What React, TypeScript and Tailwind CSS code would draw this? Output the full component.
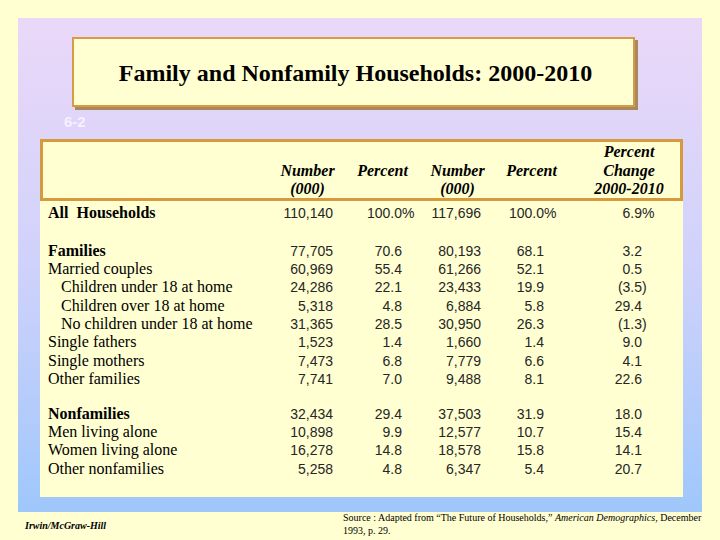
import type { ReactNode } from 'react'

type Row = {
  label: string
  values: string[]
  bold?: boolean
  indent?: boolean
}

const allHouseholds: Row = {
  label: 'All  Households',
  values: ['110,140', '100.0%', '117,696', '100.0%', '6.9%'],
  bold: true,
}

const families: Row[] = [
  { label: 'Families', values: ['77,705', '70.6', '80,193', '68.1', '3.2'], bold: true },
  { label: 'Married couples', values: ['60,969', '55.4', '61,266', '52.1', '0.5'] },
  { label: 'Children under 18 at home', values: ['24,286', '22.1', '23,433', '19.9', '(3.5)'], indent: true },
  { label: 'Children over 18 at home', values: ['5,318', '4.8', '6,884', '5.8', '29.4'], indent: true },
  { label: 'No children under 18 at home', values: ['31,365', '28.5', '30,950', '26.3', '(1.3)'], indent: true },
  { label: 'Single fathers', values: ['1,523', '1.4', '1,660', '1.4', '9.0'] },
  { label: 'Single mothers', values: ['7,473', '6.8', '7,779', '6.6', '4.1'] },
  { label: 'Other families', values: ['7,741', '7.0', '9,488', '8.1', '22.6'] },
]

const nonfamilies: Row[] = [
  { label: 'Nonfamilies', values: ['32,434', '29.4', '37,503', '31.9', '18.0'], bold: true },
  { label: 'Men living alone', values: ['10,898', '9.9', '12,577', '10.7', '15.4'] },
  { label: 'Women living alone', values: ['16,278', '14.8', '18,578', '15.8', '14.1'] },
  { label: 'Other nonfamilies', values: ['5,258', '4.8', '6,347', '5.4', '20.7'] },
]

// padding-right per column so the digits line up like the slide
const valuePad = ['pr-[12px]', 'pr-[18px]', 'pr-[14px]', 'pr-[24px]', 'pr-[41px]']

// % and ) hang past the digit edge
function renderValue(v: string): ReactNode {
  const last = v.slice(-1)
  if (last === '%' || last === ')') {
    return (
      <>
        {v.slice(0, -1)}
        <span className="inline-block w-0">{last}</span>
      </>
    )
  }
  return v
}

function TableRow({ row }: { row: Row }) {
  return (
    <div className="grid grid-cols-[230px_75px_75px_75px_73px_1fr] h-[18.3px] items-center leading-[18.3px]">
      <div
        className={`whitespace-pre pl-[8px] text-[16px] text-black [font-family:'Liberation_Serif',serif] ${
          row.indent ? 'pl-[21px]' : ''
        } ${row.bold ? 'font-bold' : ''}`}
      >
        {row.label}
      </div>
      {row.values.map((v, i) => (
        <div
          key={i}
          className={`text-right text-[14px] text-[#262626] [font-family:'Liberation_Sans',sans-serif] ${valuePad[i]}`}
        >
          {renderValue(v)}
        </div>
      ))}
    </div>
  )
}

function HeaderRow() {
  const head = "text-center text-[16px] font-bold italic leading-[18.5px] text-black [font-family:'Liberation_Serif',serif]"
  return (
    <div className="h-[62px] border-[3px] border-[#d69a3e] pt-[1px]">
      <div className="grid h-full grid-cols-[227px_75px_75px_75px_73px_1fr] items-end">
        <div />
        <div className={head}>
          Number
          <br />
          (000)
        </div>
        <div className={`${head} mb-[18.5px]`}>Percent</div>
        <div className={head}>
          Number
          <br />
          (000)
        </div>
        <div className={`${head} mb-[18.5px]`}>Percent</div>
        <div className={`${head} pl-[10px]`}>
          Percent
          <br />
          Change
          <br />
          2000-2010
        </div>
      </div>
    </div>
  )
}

export default function App() {
  return (
    <div className="flex h-[540px] w-[720px] flex-col overflow-hidden bg-[#ffffd2]">
      {/* Slide panel */}
      <div className="mx-[18px] mt-[18px] flex h-[494px] w-[684px] flex-col bg-gradient-to-b from-[#ebd8f8] via-[#cfd2fb] to-[#9fc7fb]">
        <div className="ml-[54px] mt-[19px] flex h-[70px] w-[563px] items-center justify-center border-2 border-[#d49c48] bg-[#ffffd2] shadow-[3px_3px_0_#a8895a]">
          <h1 className="pl-[4px] pt-[2px] text-[24px] font-bold text-black [font-family:'Liberation_Serif',serif]">
            Family and Nonfamily Households: 2000-2010
          </h1>
        </div>

        <div className="ml-[46px] mt-[8px] h-[14px] text-[15px] font-bold leading-[14px] text-[#f6f0ff] [font-family:'Liberation_Sans',sans-serif]">
          6-2
        </div>

        <div className="ml-[22px] mt-[10px] h-[358px] w-[643px] bg-[#ffffd2]">
          <HeaderRow />
          <div className="pt-[3px]">
            <TableRow row={allHouseholds} />
            <div className="h-[19.5px]" />
            {families.map((r) => (
              <TableRow key={r.label} row={r} />
            ))}
            <div className="h-[16.6px]" />
            {nonfamilies.map((r) => (
              <TableRow key={r.label} row={r} />
            ))}
          </div>
        </div>
      </div>

      {/* Footer */}
      <div className="flex h-[28px] w-full">
        <div className="w-[343px] pl-[25px] pt-[8px] text-[10px] font-bold italic leading-[12px] text-black [font-family:'Liberation_Serif',serif]">
          Irwin/McGraw-Hill
        </div>
        <div className="whitespace-nowrap text-[10px] leading-[12.5px] text-black [font-family:'Liberation_Serif',serif]">
          Source : Adapted from “The Future of Households,” <span className="italic">American Demographics,</span> December
          <br />
          1993, p. 29.
        </div>
      </div>
    </div>
  )
}
